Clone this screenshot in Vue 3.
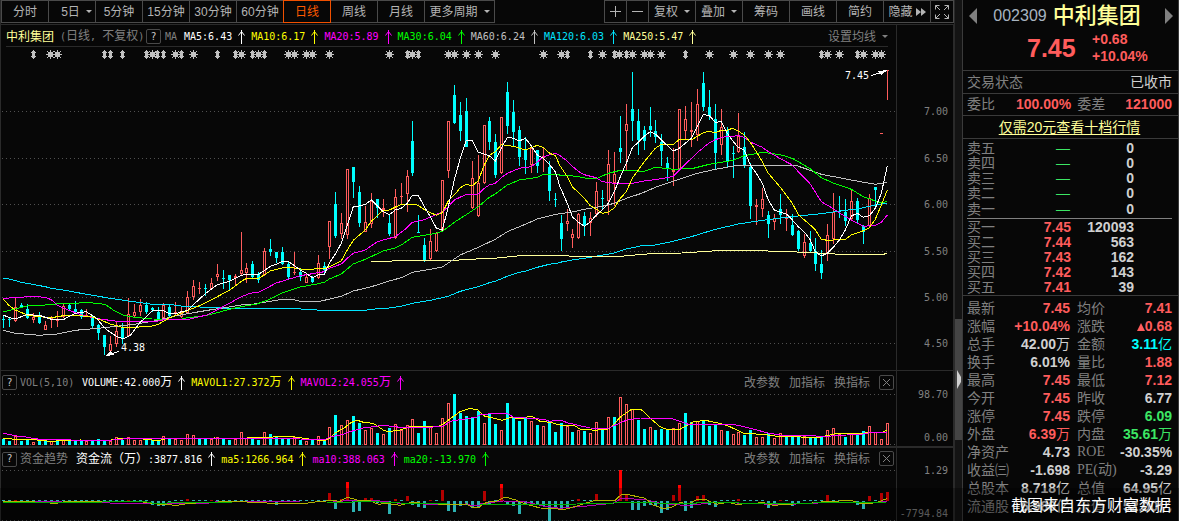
<script setup>
const periods = ['分时', '5日', '5分钟', '15分钟', '30分钟', '60分钟', '日线', '周线', '月线', '更多周期']
const dropdowns = ['5日', '更多周期', '复权', '叠加']
const tools = ['复权', '叠加', '筹码', '画线', '简约']

const averages = [
  { text: 'MA5:6.43', color: 'white' },
  { text: 'MA10:6.17', color: 'yellow' },
  { text: 'MA20:5.89', color: 'magenta' },
  { text: 'MA30:6.04', color: 'green' },
  { text: 'MA60:6.24', color: 'silver' },
  { text: 'MA120:6.03', color: 'aqua' },
  { text: 'MA250:5.47', color: 'cream' }
]
const volumeLegend = [
  { text: 'VOLUME:42.000', unit: '万', color: 'white' },
  { text: 'MAVOL1:27.372', unit: '万', color: 'yellow' },
  { text: 'MAVOL2:24.055', unit: '万', color: 'magenta' }
]
const flowLegend = [
  { lead: '资金流（万）', text: ':3877.816', color: 'white' },
  { text: 'ma5:1266.964', color: 'yellow' },
  { text: 'ma10:388.063', color: 'magenta' },
  { text: 'ma20:-13.970', color: 'green' }
]
const indicatorActions = ['改参数', '加指标', '换指标']

// Column of trading day i.
const dayX = (i) => 3 + 6 * i - Math.floor((i + 0.6) / 13.75)

// Direction (c = down, r = up), high, body top, body bottom, low.
const candles = `c316 319 320 328|c317 319 320 327|r297 307 321 322|c303 305 307 308|c304 309 318 319|r313 317 320 323|c312 316 323 324|r321 325 330 330|r316 317 319 328|r311 320 321 327
r303 306 317 318|c304 305 309 310|c301 309 312 312|c309 310 317 319|r309 315 316 317|c315 317 326 329|c324 325 333 340|c335 335 347 355|r336 344 351 352|r322 331 344 347
c323 327 338 344|r298 314 336 337|r304 312 316 317|r299 305 312 316|c302 305 312 314|c307 308 310 312|c307 312 319 320|r303 305 318 320|c305 307 316 317|r302 312 313 316
r307 312 317 318|r291 297 313 313|r280 286 297 300|r282 288 289 294|c284 288 289 296|r278 283 289 290|r264 274 277 281|c270 278 279 289|c275 275 280 290|r274 276 278 285
r232 270 274 275|r263 268 273 283|c261 264 277 278|c272 274 280 283|r248 251 275 276|c239 249 252 256|c252 252 258 263|c247 252 264 265|c261 264 277 279|r252 272 273 275
c268 272 277 281|r274 277 283 283|c276 277 282 283|r255 263 278 279|c262 266 270 273|r221 221 247 259|c192 204 236 238|r213 223 234 239|r169 169 235 239|c167 167 182 198
c186 192 223 227|r206 222 232 232|r193 201 224 228|c199 199 208 218|r199 208 210 217|c214 223 234 236|r189 197 238 239|r183 196 197 204|r170 176 194 212|c121 141 173 176
c215 232 233 233|c238 245 260 262|r229 241 259 260|r232 233 251 252|r180 180 231 232|r121 121 171 178|c85 95 123 124|c102 115 131 141|c98 111 147 147|r161 178 208 209
r155 183 216 217|r125 125 183 184|c117 121 142 150|c134 142 175 178|r117 117 173 174|c82 92 126 134|c100 112 132 147|c126 130 157 166|c137 150 160 174|r145 148 165 173
c150 150 166 173|r148 156 158 172|c161 167 191 201|c193 199 200 207|c215 223 239 251|r209 221 224 231|r229 234 238 248|r213 214 238 239|c212 216 225 236|r212 218 223 236
r182 191 214 217|c190 198 199 210|r150 164 201 215|r152 174 183 206|c116 148 152 163|r104 124 131 170|c72 109 121 141|c109 121 140 155|c126 130 141 150|c107 126 130 137
c120 131 137 143|c134 142 151 166|c157 163 169 181|r148 170 172 186|r109 109 169 170|r106 119 131 139|r102 130 132 147|r89 104 135 141|c72 83 107 111|c90 107 116 120
c104 119 153 169|r109 127 145 155|c127 130 162 167|c146 153 154 178|r113 136 152 153|c132 147 165 168|c163 167 206 219|r199 205 207 225|r188 199 209 217|c211 215 224 238
r214 218 222 230|c194 209 215 224|r209 217 219 231|c214 225 235 236|c230 231 249 251|r234 242 256 258|c231 243 251 252|c238 251 264 271|c250 264 273 279|r224 235 253 261
r193 212 239 244|c196 211 212 218|c199 212 221 226|r190 201 219 221|c198 201 220 224|c225 226 232 244|r194 198 226 227|c187 187 190 207|r133 133 134 134|r70 70 71 100`
  .split(/[|\n]/)
  .map((s, i) => {
    const [high, top, bottom, low] = s.slice(1).split(' ').map(Number)
    return { x: dayX(i), up: s[0] === 'r', high, top, bottom, low }
  })

// Builds a polyline from runs of points, each run in thirds of a pixel from its own origin.
const trace = (...runs) =>
  runs
    .map(([ox, oy, pts]) =>
      pts
        .split(' ')
        .map((p) => {
          const [x, y] = p.split(',').map(Number)
          return `${(ox + x / 3).toFixed(1)},${(oy + y / 3).toFixed(1)}`
        })
        .join(' ')
    )
    .join(' ')

const priceLines = [
  {
    color: 'aqua',
    points: trace(
      [0, 220, '10,175 28,177 64,187 136,200 154,205 190,210 250,221 325,234 385,243 457,253 508,253 550,259 620,262 688,265 740,265'],
      [250, 60, '0,745 120,745 200,750 350,750 364,748 418,744 454,739 487,730 541,721 595,709 631,694 685,680 718,668 736,664 772,649 808,637 826,634 862,622 898,613 925,609'],
      [560, 60, '0,607 37,600 91,592 163,579 199,567 245,557 280,556 340,544 394,530 466,508 535,492 600,482 661,474 715,468 784,461 838,453 892,447 946,435 982,430']
    )
  },
  {
    color: 'cream',
    points: trace(
      [250, 60, '364,604 425,604 430,601 620,601 640,598 720,596 810,587 925,587'],
      [560, 60, '0,587 90,590 170,590 270,581 365,579 470,572 615,572 640,575 690,575 760,578 840,583 970,583 982,580']
    )
  },
  {
    color: 'silver',
    points: trace(
      [0, 220, '10,331 46,340 118,346 172,342 226,331 259,328 313,323 403,313 457,304 526,288 580,278 634,269 688,261 724,255 740,254'],
      [250, 60, '0,734 43,727 97,718 125,718 150,724 210,724 274,709 310,693 364,680 418,663 454,653 487,637 541,628 577,621 595,609 631,585 685,562 736,538 772,515 826,493 862,477 916,463'],
      [560, 60, '0,461 37,456 73,448 127,439 163,430 199,415 245,400 286,382 340,364 412,340 466,328 535,316 600,318 661,317 710,317 751,331 784,343 838,353 910,367 946,373 982,367']
    )
  },
  {
    color: 'green',
    points: trace(
      [0, 220, '10,276 46,267 82,258 136,255 190,250 226,250 259,247 315,253 340,270 370,286 403,292 457,297 544,298 562,293 610,288 652,278 688,268 724,260 740,257'],
      [250, 60, '20,732 40,725 61,717 97,699 151,681 205,671 223,667 238,657 274,642 310,612 346,598 400,573 436,564 454,555 487,532 559,520 577,514 613,487 649,464 685,440 718,412 736,402 772,375 808,360 862,352 880,343 925,343'],
      [560, 60, '0,346 22,346 55,350 91,357 109,356 145,340 181,331 253,334 286,322 340,328 400,325 448,313 484,307 520,301 553,287 610,277 661,284 697,295 751,326 784,353 820,369 874,388 910,410 946,423 964,429 982,424']
    )
  },
  {
    color: 'magenta',
    points: trace(
      [0, 220, '10,235 46,233 82,230 118,230 145,235 160,243 170,254 190,264 226,278 259,289 300,297 345,303 475,303 500,297 570,297 620,285 652,269 688,250 724,230 740,224'],
      [250, 60, '0,700 25,697 43,688 79,669 115,658 151,647 187,641 223,635 238,625 274,612 292,595 310,580 346,570 382,545 436,530 463,510 487,487 523,479 577,456 595,440 613,420 649,403 685,402 703,385 718,375 736,370 754,353 772,340 808,325 844,320 862,306 880,290 916,280'],
      [560, 60, '0,287 22,303 37,319 55,334 73,344 109,353 127,365 163,370 217,370 253,363 304,356 340,349 376,313 412,278 448,248 466,240 484,232 535,227 553,232 571,246 607,262 625,275 661,296 697,315 715,335 751,372 784,425 820,446 856,470 892,490 910,499 946,496 964,487 982,465']
    )
  },
  {
    color: 'yellow',
    points: trace(
      [0, 220, '10,238 28,257 46,270 82,285 118,290 154,293 190,287 226,286 259,289 277,291 300,299 331,312 367,322 403,324 421,320 457,318 475,313 508,294 562,272 598,257 652,230 688,211 724,184 740,175'],
      [250, 60, '0,655 25,655 43,645 61,633 97,624 115,622 169,629 187,628 205,624 223,627 238,620 274,602 292,570 310,541 346,510 364,484 400,450 418,450 454,433 487,433 505,436 523,449 559,466 577,458 595,423 613,405 631,383 649,373 667,377 685,362 703,315 718,286 736,275 754,254 790,259 826,270 862,256 880,262 898,279 916,287'],
      [560, 60, '0,317 22,350 37,380 73,415 91,437 109,447 127,460 145,456 163,444 181,415 199,395 217,355 253,305 286,265 304,253 340,254 358,238 394,240 412,229 430,218 448,214 466,218 484,211 502,211 517,205 535,213 553,225 571,247 589,275 607,305 625,340 661,382 697,430 715,464 751,495 766,510 784,538 802,541 856,538 874,525 910,512 928,503 946,478 964,435 982,390']
    )
  },
  {
    color: 'white',
    points: trace(
      [0, 220, '10,285 28,293 46,297 64,290 82,284 118,286 154,298 190,299 208,289 226,280 259,275 290,295 313,323 331,337 349,349 370,357 390,347 403,330 421,307 439,290 457,272 490,272 508,281 526,282 544,275 562,272 580,254 616,221 652,194 688,184 724,166 740,163'],
      [250, 60, '25,643 43,632 61,619 79,613 97,604 115,604 133,617 151,630 169,640 187,653 205,645 223,643 238,610 256,582 274,550 292,495 310,440 328,438 346,433 364,420 382,438 400,455 418,464 436,450 454,445 472,430 487,406 505,406 523,440 541,470 559,504 577,510 595,440 613,360 631,295 649,241 667,241 685,277 703,282 718,287 736,303 754,265 772,232 790,235 808,243 826,235 844,257 862,285 880,295 898,313 916,335'],
      [560, 60, '0,380 22,430 37,470 55,487 73,499 91,486 109,465 127,450 145,430 163,395 181,350 199,310 217,263 235,247 253,228 271,215 286,222 304,240 340,273 358,265 376,250 394,235 412,200 430,163 448,167 466,187 484,185 502,220 520,245 535,262 553,270 571,315 589,340 607,370 625,420 643,450 679,462 697,480 715,500 733,516 751,540 766,575 784,588 802,580 820,562 838,540 856,510 874,468 892,460 910,472 928,467 946,445 964,400 982,318']
    )
  }
]

// Event marks above the candles: n = narrow, w = wide star.
const events = `n33 w50 w57 n104 n110 n122 n146 w152 n157 n163 w175 n181 w193 n217 n235 w241 n252 w258 n264 w288 w294 w306 w312 w329 w389
n407 w412 n418 w448 w454 w466 w478 w495 w543 w561 n567 n590 w602 n614 w619 n626 w632 w644 w650 w661 n685 w709 w733 w750 w768 w780 n821 w827 w839 n857 w863 w875 w881`
  .split(/\s+/)
  .map((s) => ({ wide: s[0] === 'w', x: Number(s.slice(1)) }))
const wideMark = 'M-4 0h9v1h-9zM0 -4h1v9h-1zM-2 -2h5v5h-5zM-3 -3h1v1h-1zM3 -3h1v1h-1zM-3 3h1v1h-1zM3 3h1v1h-1z'
const narrowMark = 'M0 -4h1v9h-1zM-1 -3h3v7h-3zM-2 -2h5v1h-5zM-2 2h5v1h-5z'

// Bar tops in thirds of a pixel below the panel's top edge.
const volumes = `c206 c213 r199 c213 c209 r216 c212 c213 r214 c213 r207 c207 c213 c214 r214 c210 c208 c213 r212 r201
c211 r201 r210 r211 c207 c210 c210 r198 c205 r207 r210 r192 r195 c205 c206 r207 r202 c207 c210 r208
r187 r203 c207 c210 r187 c192 c201 c204 c204 r201 c209 r213 c211 r198 c211 r171 c135 r165 r150 c138
c159 r180 r175 c189 r192 c174 r162 r180 r165 r147 c189 c153 r171 r189 r144 r99 c72 c129 c138 c142
c123 r159 c129 c162 r180 c99 c144 c153 c141 r153 c165 r168 c153 c186 c159 r168 c186 r180 c183 r189
r156 c177 r141 c141 r82 r102 r118 c150 c177 r171 c180 c177 c177 r174 r159 c129 c156 r153 c153 c168
c162 r180 c183 r192 r186 c195 c180 r201 r201 c189 r204 r189 c198 c201 c200 r198 c202 c202 c200 r180
r174 r192 c201 r192 c195 c183 r168 r186 r207 r159`
  .split(/\s+/)
  .map((s, i) => {
    const top = 370 + Math.round(Number(s.slice(1)) / 3)
    return { x: dayX(i), up: s[0] === 'r', top, height: 445 - top }
  })
const volumeLines = [
  {
    color: 'yellow',
    points: trace(
      [0, 370, '10,206 60,208 110,210 150,214 190,212 240,210 330,211 350,207 385,205 430,207 475,212 500,206 560,205 645,204 660,207 715,204 740,204 820,201 880,200 920,206 960,211 975,212 988,205 1005,189 1035,172 1050,160 1070,150 1090,157 1120,160 1135,170 1150,180 1165,185 1200,180 1235,168 1300,168 1310,171 1330,162 1355,143 1380,125 1410,115 1435,120 1440,127'],
      [480, 370, '15,139 40,144 66,151 95,142 120,147 153,138 180,154 210,157 240,165 285,168 300,177 345,181 385,177 400,165 420,142 455,118 485,120 511,145 540,170 560,178 600,178 640,156 675,151 715,159 745,168 790,189 865,195 900,200 1020,202 1070,190 1135,192 1160,188 1205,188 1222,180']
    )
  },
  {
    color: 'magenta',
    points: trace(
      [0, 370, '10,190 50,198 85,202 100,206 140,209 280,211 340,210 370,207 430,206 560,207 715,206 800,206 865,205 900,207 975,208 990,201 1025,194 1050,185 1090,174 1150,166 1200,172 1290,172 1330,168 1355,153 1395,147 1430,141'],
      [480, 370, '0,135 40,130 85,132 100,141 190,148 210,154 240,150 265,159 330,174 385,175 400,168 440,150 480,144 580,147 625,163 760,163 800,172 860,188 900,195 1040,199 1100,195 1140,194 1180,186 1222,186']
    )
  }
]

// Net flow bars: outflow days go below the zero line, inflow days above it.
const flowMap = {
  2: 390, 31: 387, 35: 390, 21: 390, 55: 369, 57: 387, 58: 336, 61: 384, 62: 384, 66: 387, 68: 378, 72: 390, 74: 360, 81: 363,
  84: 342, 97: 387, 100: 372, 104: 300, 105: 375, 113: 375, 114: 345, 117: 378, 118: 375, 124: 387, 131: 390,
  139: 375, 146: 378, 148: 369, 149: 366,
  25: 405, 26: 408, 27: 408, 28: 402, 46: 405, 56: 417, 59: 426, 60: 423, 63: 400, 64: 400, 65: 432, 69: 405, 70: 411,
  71: 414, 75: 423, 76: 426, 77: 408, 78: 406, 79: 415, 80: 412, 82: 403, 85: 402, 86: 408, 87: 432, 88: 403,
  89: 404, 90: 405, 91: 407, 92: 453, 93: 414, 94: 420, 95: 411, 106: 420, 107: 420, 108: 408, 109: 405, 110: 408,
  111: 429, 112: 420, 115: 423, 116: 414, 119: 405, 120: 411, 129: 414, 130: 402, 133: 408, 134: 403, 144: 405, 145: 417
}
const flows = Array.from({ length: 150 }, (_, i) => {
  const v = flowMap[i] ?? 391
  const inflow = v !== 391 && v < 392
  const tip = 370 + Math.round(v / 3)
  const y = Math.min(tip, 501)
  return { x: dayX(i), inflow, y, height: Math.max(1, Math.abs(tip - 501)) }
})
const flowLines = [
  {
    color: 'magenta',
    points: trace(
      [0, 370, '10,396 150,394 200,397 460,401 620,400 660,394 900,396 1000,396 1060,390 1110,390 1150,394 1200,400 1300,403 1400,402 1420,408 1440,407'],
      [480, 370, '0,402 70,393 130,394 190,408 240,415 320,408 400,400 425,384 500,390 540,400 625,407 700,397 800,400 900,404 1000,400 1050,397 1130,398 1190,398 1222,393']
    )
  },
  {
    color: 'yellow',
    points: trace(
      [0, 370, '10,394 145,397 160,402 200,394 250,394 430,396 470,402 530,406 570,400 700,394 840,401 910,401 960,394 1000,392 1020,394 1042,382 1080,392 1110,392 1135,403 1160,400 1200,406 1230,398 1290,400 1340,404 1400,402 1420,414 1440,411'],
      [480, 370, '0,408 20,397 50,393 75,381 105,389 130,400 180,414 225,415 245,420 270,414 310,402 345,391 405,391 425,373 440,373 495,385 520,405 550,416 575,412 600,397 625,402 655,387 680,390 710,403 745,397 770,403 850,398 880,406 940,402 990,400 1040,394 1115,392 1145,402 1190,398 1215,388 1222,385']
    )
  },
  {
    color: 'green',
    points: trace(
      [0, 370, '10,397 300,397 320,394 430,394 460,400 600,397 700,396 980,396 1040,397 1100,394 1140,396 1200,399 1340,402 1440,402'],
      [480, 370, '0,402 150,402 220,405 290,402 400,399 430,397 530,399 600,402 700,396 800,400 1000,399 1222,396']
    )
  }
]

const gridRows = [111, 158, 204, 251, 297, 343]
const priceTicks = ['7.00', '6.50', '6.00', '5.50', '5.00', '4.50']

const asks = ['卖五', '卖四', '卖三', '卖二', '卖一'].map((name) => ({ name, price: '—', volume: '0' }))
const bids = [
  { name: '买一', price: '7.45', volume: '120093' },
  { name: '买二', price: '7.44', volume: '563' },
  { name: '买三', price: '7.43', volume: '162' },
  { name: '买四', price: '7.42', volume: '143' },
  { name: '买五', price: '7.41', volume: '39' }
]
// label, value, unit, colour, twice per row
const stats = [
  ['最新', '7.45', '', 'up', '均价', '7.41', '', 'up'],
  ['涨幅', '+10.04%', '', 'up', '涨跌', '0.68', '', 'up'],
  ['总手', '42.00', '万', 'flat', '金额', '3.11', '亿', 'cash'],
  ['换手', '6.01%', '', 'flat', '量比', '1.88', '', 'up'],
  ['最高', '7.45', '', 'up', '最低', '7.12', '', 'up'],
  ['今开', '7.45', '', 'up', '昨收', '6.77', '', 'flat'],
  ['涨停', '7.45', '', 'up', '跌停', '6.09', '', 'down'],
  ['外盘', '6.39', '万', 'up', '内盘', '35.61', '万', 'down'],
  ['净资产', '4.73', '', 'flat', 'ROE', '-30.35%', '', 'flat'],
  ['收益㈢', '-1.698', '', 'flat', 'PE(动)', '-3.29', '', 'flat'],
  ['总股本', '8.718', '亿', 'flat', '总值', '64.95', '亿', 'flat'],
  ['流通股', '6.980', '亿', 'flat', '流值', '52.00', '亿', 'flat']
]
</script>

<template>
  <div class="app">
    <main class="charts">
      <nav class="toolbar">
        <div class="group periods">
          <button
            v-for="p in periods"
            :key="p"
            type="button"
            :class="{ active: p === '日线', long: p === '更多周期', indent: p === '5日' }"
          >
            {{ p }}<i v-if="dropdowns.includes(p)" class="caret"></i>
          </button>
        </div>
        <div class="group">
          <button type="button" class="zoom" aria-label="放大">
            <svg width="11" height="11"><path d="M0 5.5H11M5.5 0V11" /></svg>
          </button>
          <button type="button" class="zoom" aria-label="缩小">
            <svg width="11" height="11"><path d="M0 5.5H11" /></svg>
          </button>
          <button v-for="t in tools" :key="t" type="button">
            {{ t }}<i v-if="dropdowns.includes(t)" class="caret"></i>
          </button>
          <button type="button" class="hide">
            隐藏<svg width="10" height="8"><path class="solid" d="M0 0L5 4L0 8ZM5 0L10 4L5 8Z" /></svg>
          </button>
          <button type="button" class="full" aria-label="全屏">
            <svg width="14" height="14">
              <path d="M.5 4.5V.5H4.5M.5 .5L5 5M9.500 .5H13.500V4.500M13.500 .5L9 5M.5 9.500V13.500H4.500M.5 13.500L5 9M13.500 9.500V13.500H9.500M13.500 13.500L9 9" />
            </svg>
          </button>
        </div>
      </nav>

      <section class="pane">
        <div class="plot">
          <header class="legend first">
            <strong class="cream">中利集团</strong>
            <span class="cycle"><span class="mono">&nbsp;(</span>日线<span class="mono">, </span>不复权<span class="mono">)</span></span>
            <button type="button" class="box mono" aria-label="说明">?</button>
            <span class="mono tag">MA</span>
            <span v-for="m in averages" :key="m.text" class="item" :class="m.color">
              <span class="mono">{{ m.text }}</span>
              <svg class="arrow" width="7" height="14"><path d="M3.500 0V14M.5 5.500L3.500 1.500L6.500 5.500" /></svg>
            </span>
            <button type="button" class="setting">设置均线<i class="caret"></i></button>
          </header>
          <div class="canvas">
            <svg class="graph price" viewBox="0 47 896 323" preserveAspectRatio="none">
              <line v-for="y in gridRows" :key="y" class="grid" x1="2" x2="896" :y1="y + 0.5" :y2="y + 0.5" />
              <path
                v-for="e in events"
                :key="e.x"
                class="event"
                :d="e.wide ? wideMark : narrowMark"
                :transform="`translate(${e.x} 54)`"
              />
              <g v-for="c in candles" :key="c.x" :class="c.up ? 'rise' : 'fall'">
                <template v-if="c.up">
                  <rect :x="c.x" :y="c.high" width="1" :height="c.top - c.high" />
                  <rect :x="c.x" :y="c.bottom" width="1" :height="c.low - c.bottom" />
                  <path
                    :d="`M${c.x - 1} ${c.top}h3v${Math.max(1, c.bottom - c.top)}h-3z` + (c.bottom - c.top > 2 ? `M${c.x} ${c.top + 1}v${c.bottom - c.top - 2}h1v${c.top + 2 - c.bottom}z` : '')"
                  />
                </template>
                <template v-else>
                  <rect :x="c.x" :y="c.high" width="1" :height="c.low - c.high" />
                  <rect :x="c.x - 1" :y="c.top" width="3" :height="c.bottom - c.top" />
                </template>
              </g>
              <polyline v-for="l in priceLines" :key="l.color" :class="l.color" :points="l.points" />
              <g class="pointer">
                <path d="M871 75.500L880 73M119 351.500L111 354" />
                <path class="solid" d="M888 70L878 71L881 75ZM105 356L110 351L114 355Z" />
              </g>
            </svg>
            <span class="note high mono">7.45</span>
            <span class="note low mono">4.38</span>
          </div>
        </div>
        <svg class="axis" width="57" height="345">
          <text v-for="(t, i) in priceTicks" :key="t" class="mono" x="51" :y="gridRows[i] - 21" text-anchor="end">{{ t }}</text>
        </svg>
      </section>

      <section class="pane">
        <div class="plot">
          <header class="legend">
            <button type="button" class="box mono" aria-label="说明">?</button>
            <span class="mono tag vol">VOL(5,10)</span>
            <span v-for="m in volumeLegend" :key="m.text" class="item" :class="m.color">
              <span><span class="mono">{{ m.text }}</span>{{ m.unit }}</span>
              <svg class="arrow" width="7" height="14"><path d="M3.500 0V14M.5 5.500L3.500 1.500L6.500 5.500" /></svg>
            </span>
            <span class="actions">
              <button v-for="a in indicatorActions" :key="a" type="button">{{ a }}</button>
              <button type="button" class="box" aria-label="关闭">
                <svg width="7" height="7"><path d="M0 0L7 7M7 0L0 7" /></svg>
              </button>
            </span>
          </header>
          <svg class="graph volume" viewBox="0 394 896 52" preserveAspectRatio="none">
            <line class="grid" x1="2" x2="896" y1="394.5" y2="394.5" />
            <line class="grid" x1="2" x2="896" y1="444.5" y2="444.5" />
            <g v-for="v in volumes" :key="v.x" :class="v.up ? 'rise' : 'fall'">
              <path v-if="v.up" :d="`M${v.x - 1} ${v.top}h3v${v.height}h-3zM${v.x} ${v.top + 1}v${v.height - 2}h1v${2 - v.height}z`" />
              <rect v-else :x="v.x - 1" :y="v.top" width="3" :height="v.height" />
            </g>
            <polyline v-for="l in volumeLines" :key="l.color" :class="l.color" :points="l.points" />
          </svg>
        </div>
        <svg class="axis" width="57" height="75">
          <text class="mono" x="51" y="27" text-anchor="end">98.70</text>
          <text class="mono" x="51" y="70" text-anchor="end">0.00</text>
        </svg>
      </section>

      <section class="pane flow-pane">
        <div class="plot">
          <header class="legend">
            <button type="button" class="box mono" aria-label="说明">?</button>
            <span class="tag flow-tag">资金趋势</span>
            <span v-for="m in flowLegend" :key="m.text" class="item" :class="m.color">
              <span>{{ m.lead }}<span class="mono">{{ m.text }}</span></span>
              <svg class="arrow" width="7" height="14"><path d="M3.500 0V14M.5 5.500L3.500 1.500L6.500 5.500" /></svg>
            </span>
            <span class="actions">
              <button v-for="a in indicatorActions" :key="a" type="button">{{ a }}</button>
              <button type="button" class="box" aria-label="关闭">
                <svg width="7" height="7"><path d="M0 0L7 7M7 0L0 7" /></svg>
              </button>
            </span>
          </header>
          <svg class="graph flow" viewBox="0 470 896 51" preserveAspectRatio="none">
            <line class="grid" x1="2" x2="896" y1="470.5" y2="470.5" />
            <line class="grid" x1="2" x2="896" y1="520.5" y2="520.5" />
            <rect
              v-for="f in flows"
              :key="f.x"
              :class="f.inflow ? 'inflow' : 'outflow'"
              :x="f.x - 1"
              :y="f.y"
              width="3"
              :height="f.height"
            />
            <polyline v-for="l in flowLines" :key="l.color" :class="l.color" :points="l.points" />
          </svg>
        </div>
        <svg class="axis" width="57" height="73">
          <text class="mono" x="51" y="26" text-anchor="end">1.29</text>
          <text class="mono" x="51" y="69" text-anchor="end">-7794.84</text>
        </svg>
      </section>
    </main>

    <div class="splitter">
      <button type="button" aria-label="收起">
        <svg width="4" height="19"><path class="solid" d="M0 0L4 7V12L0 19Z" /></svg>
      </button>
    </div>

    <aside class="quote">
      <header class="head">
        <button type="button" aria-label="上一只">
          <svg width="8" height="16"><path class="solid" d="M8 0V16L0 8Z" /></svg>
        </button>
        <div class="title"><span>002309</span><h1>中利集团</h1></div>
        <button type="button" aria-label="下一只">
          <svg width="8" height="16"><path class="solid" d="M0 0V16L8 8Z" /></svg>
        </button>
      </header>
      <div class="last up">
        <b>7.45</b>
        <p>+0.68<br />+10.04%</p>
      </div>
      <div class="line"><span>交易状态</span><em>已收市</em></div>
      <div class="line ratio">
        <span>委比</span><b class="up">100.00%</b><span>委差</span><b class="up">121000</b>
      </div>
      <div class="line promo"><a href="#">仅需20元查看十档行情</a></div>
      <table class="book asks">
        <tbody>
          <tr v-for="a in asks" :key="a.name">
            <th scope="row">{{ a.name }}</th><td class="down dash">{{ a.price }}</td><td>{{ a.volume }}</td>
          </tr>
        </tbody>
      </table>
      <table class="book bids">
        <tbody>
          <tr v-for="b in bids" :key="b.name">
            <th scope="row">{{ b.name }}</th><td class="up">{{ b.price }}</td><td>{{ b.volume }}</td>
          </tr>
        </tbody>
      </table>
      <table class="stats">
        <tbody>
          <tr v-for="s in stats" :key="s[0]">
            <th scope="row">{{ s[0] }}</th>
            <td :class="s[3]">{{ s[1] }}<i>{{ s[2] }}</i></td>
            <th scope="row" class="second" :class="{ latin: s[4] === 'ROE' || s[4] === 'PE(动)' }">{{ s[4] }}</th>
            <td :class="s[7]"><svg v-if="s[4] === '涨跌'" width="8" height="8"><path class="solid" d="M4 0L8 8H0Z" /></svg>{{ s[5] }}<i>{{ s[6] }}</i></td>
          </tr>
        </tbody>
      </table>
    </aside>

    <div class="caption">截图来自东方财富数据</div>
  </div>
</template>

<style>
body {
  background: #070707;
}
</style>

<style scoped>
.app {
  position: relative;
  display: flex;
  overflow: hidden;
  background: #070707;
  color: #808080;
  font: 12px/16px "Liberation Sans", "Noto Sans CJK SC", sans-serif;
  white-space: nowrap;
}
.app * {
  box-sizing: border-box;
}
button {
  display: flex;
  align-items: center;
  justify-content: center;
  padding: 0;
  border: 0;
  background: none;
  color: inherit;
  font: inherit;
}
svg {
  display: block;
  fill: none;
  stroke: currentColor;
}
.solid {
  fill: currentColor;
  stroke: none;
}
.mono {
  font-family: "DejaVu Sans Mono", monospace;
  font-size: 10px;
}
.charts {
  flex: 1;
  min-width: 0;
  box-shadow: inset 1px 0 #2a2a2a;
}

.toolbar {
  display: flex;
  justify-content: space-between;
  height: 24px;
  padding-left: 1px;
}
.group {
  display: flex;
  height: 23px;
}
.group button {
  width: 48px;
  margin-right: -1px;
  border: 1px solid #4a4a4a;
  color: #b4b4b4;
}
.group button.active {
  position: relative;
  border-color: #f05000;
  color: #ff5a00;
}
.group button.long {
  width: 71px;
}
.group button.indent {
  padding-left: 9px;
}
.group button.zoom {
  width: 23px;
}
.group button.full {
  width: 24px;
  margin-right: 0;
}
.group .hide svg {
  margin-left: 3px;
}
.caret {
  margin-left: 6px;
  border: 3px solid transparent;
  border-top-color: currentColor;
  border-bottom: 0;
}

.pane {
  display: flex;
  border-top: 1px solid #2a2a2a;
}
.flow-pane {
  border-top-width: 2px;
}
.plot {
  flex: 1;
  min-width: 0;
  border-right: 1px solid #2a2a2a;
}
.axis {
  flex: none;
  border-right: 1px solid #2a2a2a;
}
.axis text {
  fill: #808080;
  stroke: none;
}
.legend {
  display: flex;
  align-items: center;
  height: 23px;
  padding-left: 2px;
}
.legend.first {
  height: 22px;
  margin: 0 8px 0 6px;
  padding: 2px 0 0;
  border-bottom: 1px solid #2a2a2a;
}
.legend strong {
  font-weight: 400;
}
.flow-pane .legend {
  height: 22px;
}
.cycle {
  width: 92px;
}
.box {
  width: 15px;
  height: 15px;
  border: 1px solid #4a4a4a;
  border-radius: 2px;
}
.box.mono {
  color: #c8c8c8;
}
.tag {
  width: 19px;
  margin-left: 4px;
}
.tag.vol {
  width: 62px;
}
.tag.flow-tag {
  width: 56px;
}
.legend:not(.first) .tag {
  margin-left: 3px;
}
.item {
  display: flex;
  align-items: center;
  gap: 6px;
  margin-right: 6px;
}
.setting,
.actions {
  margin-left: auto;
}
.actions {
  display: flex;
  gap: 9px;
  padding-right: 2px;
}
.canvas {
  position: relative;
}
.graph {
  width: 100%;
  shape-rendering: crispEdges;
}
.price {
  height: 323px;
}
.volume {
  height: 52px;
}
.flow {
  height: 51px;
}
.grid {
  stroke: #505050;
  stroke-dasharray: 1 3;
}
.event {
  fill: #c0c0c0;
  stroke: none;
}
.rise {
  fill: #ff5c5c;
  fill-rule: evenodd;
  stroke: none;
}
.fall {
  fill: #00ffff;
  stroke: none;
}
.inflow {
  fill: #ff0000;
  stroke: none;
}
.outflow {
  fill: #40ffff;
  stroke: none;
}
.pointer {
  color: #ffffff;
}
.note {
  position: absolute;
  color: #ffffff;
}
.note.high {
  top: 21px;
  right: 27px;
}
.note.low {
  bottom: 14px;
  left: 121px;
}
.white {
  color: #ffffff;
}
.yellow {
  color: #ffff00;
}
.magenta {
  color: #ff00ff;
}
.green {
  color: #00ff00;
}
.silver {
  color: #c0c0c0;
}
.aqua {
  color: #00e4ff;
}
.cream {
  color: #ffff99;
}

.splitter {
  display: flex;
  flex: none;
  align-items: center;
  width: 8px;
  border-left: 1px solid #2a2a2a;
  background: linear-gradient(#141414 319px, #444444 319px, #444444 440px, #141414 440px);
}
.splitter button {
  width: 7px;
  height: 121px;
  margin-top: 238px;
  color: #d0d0d0;
}

.quote {
  flex: none;
  width: 217px;
  height: 521px;
  overflow: hidden;
  border: solid #3a3a3a;
  border-width: 0 1px;
  font-size: 14px;
}
.head {
  display: flex;
  align-items: center;
  justify-content: space-between;
  height: 32px;
  padding: 0 5px 0 6px;
}
.title {
  display: flex;
  align-items: center;
  gap: 6px;
  margin-right: 8px;
  color: #a8b4c0;
  font-size: 16px;
}
.title h1 {
  margin: 0;
  color: #ffff99;
  font-size: 22px;
  font-weight: 500;
  line-height: 32px;
}
.last {
  display: flex;
  align-items: center;
  height: 38px;
  padding: 0 0 6px 64px;
}
.last b {
  width: 65px;
  font-size: 25px;
}
.last p {
  margin: 0;
  font-weight: 700;
  line-height: 17px;
}
.line {
  display: flex;
  justify-content: space-between;
  height: 23px;
  padding: 0 6px 0 4px;
  border-top: 1px solid #3a3a3a;
  line-height: 23px;
}
.line em {
  color: #d0d0d0;
  font-style: normal;
}
.ratio {
  height: 22px;
  line-height: 21px;
}
.ratio b:nth-child(2) {
  flex: 1;
  padding-right: 6px;
  text-align: right;
}
.ratio span:nth-child(3) {
  margin-right: 20px;
}
.promo {
  justify-content: center;
  height: 24px;
  border-bottom: 1px solid #3a3a3a;
}
.promo a {
  color: #ffff99;
  text-underline-offset: 2px;
}
table {
  width: 100%;
  border-collapse: collapse;
  table-layout: fixed;
}
th,
td {
  padding: 0;
}
th {
  font-weight: 400;
  text-align: left;
}
td {
  color: #d0d0d0;
  font-weight: 700;
  text-align: right;
}
td i {
  font-style: normal;
  font-weight: 400;
}
td svg {
  display: inline-block;
}
.book {
  width: calc(100% - 10px);
  margin: 0 5px 0 4px;
  line-height: 15px;
}
.book tr {
  height: 15px;
}
.book th {
  width: 56px;
}
.book td:nth-child(2) {
  width: 48px;
}
.book td:nth-child(3) {
  padding-right: 38px;
}
.book td.dash {
  padding-right: 1px;
  font-weight: 400;
}
.asks {
  margin-top: 2px;
  border-bottom: 1px solid #808080;
}
.asks tr:last-child {
  height: 17px;
}
.bids {
  margin-top: 1px;
}
.stats {
  border-top: 1px solid #3a3a3a;
}
.stats tr {
  height: 18px;
  line-height: 18px;
}
.stats tr:first-child {
  height: 22px;
  vertical-align: bottom;
}
.stats th {
  width: 45px;
  padding-left: 4px;
}
.stats td:nth-child(2) {
  width: 62px;
}
.stats th.second {
  width: 50px;
  padding-left: 7px;
}
.stats th.latin {
  font-family: "Liberation Serif", "Noto Sans CJK SC", serif;
}
.stats td:last-child {
  padding-right: 6px;
}
.up {
  color: #ff5c5c;
}
.down {
  color: #3ce664;
}
.cash {
  color: #00ffff;
}

.caption {
  position: absolute;
  right: 0;
  bottom: 0;
  left: 0;
  height: 33px;
  padding-right: 8px;
  background: rgba(0, 0, 0, 0.3);
  color: #ffffff;
  font-size: 16px;
  line-height: 35px;
  text-align: right;
  pointer-events: none;
}
</style>
